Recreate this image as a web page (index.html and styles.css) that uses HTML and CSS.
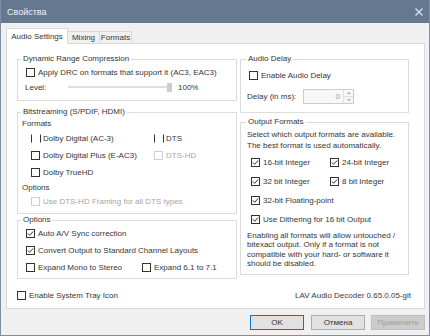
FILE: index.html
```html
<!DOCTYPE html>
<html lang="ru">
<head>
    <meta charset="UTF-8">
    <title>Свойства</title>
    <link rel="stylesheet" href="styles.css">
</head>
<body>
<div class="window">
    <div class="titlebar">
        <span class="title">Свойства</span>
        <svg class="close" width="8" height="8" viewBox="0 0 8 8"><path d="M0.5 0.5 L7.5 7.5 M7.5 0.5 L0.5 7.5"/></svg>
    </div>

    <div class="content">
        <div class="tabs">
            <div class="tab active">Audio Settings</div>
            <div class="tab tab-mixing">Mixing</div>
            <div class="tab tab-formats">Formats</div>
        </div>

        <div class="panel">
            <div class="columns">
                <!-- left column -->
                <div class="col-left">
                    <div class="group group-drc">
                        <span class="group-title">Dynamic Range Compression</span>
                        <div class="row pad-8"><span class="cb"></span>Apply DRC on formats that support it (AC3, EAC3)</div>
                        <div class="row level-row">
                            <span class="level-label">Level:</span>
                            <div class="slider"><span class="thumb"></span></div>
                            <span class="level-value">100%</span>
                        </div>
                    </div>

                    <div class="group group-bitstream">
                        <span class="group-title">Bitstreaming (S/PDIF, HDMI)</span>
                        <div class="sub-label formats-label">Formats</div>
                        <div class="row pad-13">
                            <span class="opt w-123"><span class="cb cut"></span>Dolby Digital (AC-3)</span>
                            <span class="opt"><span class="cb cut"></span>DTS</span>
                        </div>
                        <div class="row pad-13">
                            <span class="opt w-123"><span class="cb"></span>Dolby Digital Plus (E-AC3)</span>
                            <span class="opt disabled"><span class="cb"></span>DTS-HD</span>
                        </div>
                        <div class="row pad-13"><span class="cb"></span>Dolby TrueHD</div>
                        <div class="sub-label options-label">Options</div>
                        <div class="row row-16 pad-13 disabled"><span class="cb"></span>Use DTS-HD Framing for all DTS types</div>
                    </div>

                    <div class="group group-options">
                        <span class="group-title">Options</span>
                        <div class="row pad-8"><span class="cb checked"><svg viewBox="0 0 7 7"><path d="M0.8 3.4 L2.7 5.3 L6.2 1.4"/></svg></span>Auto A/V Sync correction</div>
                        <div class="row pad-8"><span class="cb checked"><svg viewBox="0 0 7 7"><path d="M0.8 3.4 L2.7 5.3 L6.2 1.4"/></svg></span>Convert Output to Standard Channel Layouts</div>
                        <div class="row pad-8">
                            <span class="opt w-116"><span class="cb"></span>Expand Mono to Stereo</span>
                            <span class="opt"><span class="cb"></span>Expand 6.1 to 7.1</span>
                        </div>
                    </div>
                </div>

                <!-- right column -->
                <div class="col-right">
                    <div class="group group-delay">
                        <span class="group-title">Audio Delay</span>
                        <div class="row pad-8 delay-check"><span class="cb"></span>Enable Audio Delay</div>
                        <div class="delay-row">
                            <span class="delay-label">Delay (in ms):</span>
                            <div class="spin">
                                <span class="spin-value">0</span>
                                <span class="spin-btns">
                                    <span class="spin-up"></span>
                                    <span class="spin-down"></span>
                                </span>
                            </div>
                        </div>
                    </div>

                    <div class="group group-output">
                        <span class="group-title">Output Formats</span>
                        <p class="note note-top">Select which output formats are available.<br>The best format is used automatically.</p>
                        <div class="fmt-list">
                            <div class="row row-19 pad-10">
                                <span class="opt w-79"><span class="cb checked"><svg viewBox="0 0 7 7"><path d="M0.8 3.4 L2.7 5.3 L6.2 1.4"/></svg></span>16-bit Integer</span>
                                <span class="opt"><span class="cb checked"><svg viewBox="0 0 7 7"><path d="M0.8 3.4 L2.7 5.3 L6.2 1.4"/></svg></span>24-bit Integer</span>
                            </div>
                            <div class="row row-19 pad-10">
                                <span class="opt w-79"><span class="cb checked"><svg viewBox="0 0 7 7"><path d="M0.8 3.4 L2.7 5.3 L6.2 1.4"/></svg></span>32 bit Integer</span>
                                <span class="opt"><span class="cb checked"><svg viewBox="0 0 7 7"><path d="M0.8 3.4 L2.7 5.3 L6.2 1.4"/></svg></span>8 bit Integer</span>
                            </div>
                            <div class="row row-19 pad-10"><span class="cb checked"><svg viewBox="0 0 7 7"><path d="M0.8 3.4 L2.7 5.3 L6.2 1.4"/></svg></span>32-bit Floating-point</div>
                            <div class="row row-19 pad-10"><span class="cb checked"><svg viewBox="0 0 7 7"><path d="M0.8 3.4 L2.7 5.3 L6.2 1.4"/></svg></span>Use Dithering for 16 bit Output</div>
                        </div>
                        <p class="note note-bottom">Enabling all formats will allow untouched /<br>bitexact output. Only if a format is not<br>compatible with your hard- or software it<br>should be disabled.</p>
                    </div>
                </div>
            </div>

            <div class="panel-footer">
                <div class="row tray"><span class="cb"></span>Enable System Tray Icon</div>
                <span class="version">LAV Audio Decoder 0.65.0.05-git</span>
            </div>
        </div>

        <div class="buttons">
            <button class="btn btn-default">OK</button>
            <button class="btn">Отмена</button>
            <button class="btn" disabled>Применить</button>
        </div>
    </div>
</div>
</body>
</html>
```

FILE: styles.css
```css
* {
    margin: 0;
    padding: 0;
    box-sizing: border-box;
}

body {
    font-family: 'Liberation Sans', Arial, sans-serif;
    font-size: 8px;
    color: #363636;
    background: #f0f0f0;
}

.window {
    width: 430px;
    height: 336px;
    background: #f0f0f0;
    border: 1px solid #7f8fa3;
    border-top: none;
    overflow: hidden;
}

/* title bar */
.titlebar {
    height: 23px;
    margin: 0 -1px;
    background: #66788f;
    display: flex;
    align-items: center;
    justify-content: space-between;
    padding: 0 7px 0 7px;
}

.title {
    color: #eef1f4;
    font-size: 9px;
}

.close {
    stroke: #e3e8ee;
    stroke-width: 1.1;
    fill: none;
}

.content {
    padding: 5px 4px 0 5px;
}

/* tabs */
.tabs {
    display: flex;
    align-items: flex-end;
    height: 16px;
    margin-bottom: -1px;
    position: relative;
    z-index: 1;
}

.tab {
    height: 13px;
    line-height: 12px;
    text-align: center;
    border: 1px solid #d9d9d9;
    background: #f0f0f0;
    margin-left: -1px;
}

.tab.active {
    height: 16px;
    line-height: 16px;
    width: 62px;
    margin-left: 0;
    background: #fff;
    border-bottom: none;
}

.tab-mixing {
    width: 33px;
}

.tab-formats {
    width: 33px;
}

/* panel */
.panel {
    background: #fff;
    border: 1px solid #d9d9d9;
    padding: 15px 15px 7px 10px;
}

.columns {
    display: flex;
    gap: 3px;
    align-items: flex-start;
}

.col-left {
    width: 220px;
}

.col-right {
    width: 169px;
}

.group {
    border: 1px solid #dcdcdc;
    display: flex;
    flex-direction: column;
}

.group-title {
    align-self: flex-start;
    height: 10px;
    line-height: 10px;
    margin: -6px 0 0 3px;
    padding: 0 2px;
    background: #fff;
}

.col-right .group-title {
    margin-left: 5px;
}

.group-drc {
    padding-bottom: 7px;
}

.group-bitstream {
    margin-top: 11px;
    padding-bottom: 4px;
}

.group-options {
    margin-top: 6px;
    padding-bottom: 2px;
}

.row {
    display: flex;
    align-items: center;
    height: 17px;
    white-space: nowrap;
}

.row-16 {
    height: 16px;
}

.row-19 {
    height: 19px;
}

.pad-8 {
    padding-left: 8px;
}

.pad-10 {
    padding-left: 10px;
}

.pad-13 {
    padding-left: 13px;
}

.opt {
    display: flex;
    align-items: center;
}

.w-123 {
    width: 123px;
}

.w-116 {
    width: 116px;
}

.w-79 {
    width: 79px;
}

.disabled {
    color: #a6a6a6;
}

/* checkbox */
.cb {
    width: 9px;
    height: 9px;
    border: 1px solid #333;
    background: #fff;
    margin-right: 3px;
    flex: none;
    display: flex;
}

.cb svg {
    width: 7px;
    height: 7px;
    fill: none;
    stroke: #333;
    stroke-width: 1;
}

.cb.cut {
    border-top-color: transparent;
    border-bottom-color: transparent;
    width: 10px;
    margin-right: 2px;
}

.disabled .cb {
    border-color: #cfcfcf;
}

.sub-label {
    padding-left: 4px;
    display: flex;
    align-items: center;
}

.formats-label {
    height: 13px;
}

.options-label {
    height: 12px;
}

/* level slider */
.level-row {
    height: 12px;
    padding-left: 7px;
}

.level-label {
    width: 43px;
}

.slider {
    width: 104px;
    height: 9px;
    display: flex;
    justify-content: flex-end;
    background: linear-gradient(#dedede, #dedede) no-repeat left center / 100% 2px;
}

.thumb {
    width: 5px;
    height: 9px;
    background: #cdcdcd;
}

.level-value {
    margin-left: 6px;
}

/* audio delay */
.group-delay {
    padding-bottom: 8px;
}

.delay-check {
    margin-top: 3px;
}

.delay-row {
    display: flex;
    align-items: center;
    height: 15px;
    margin-top: 5px;
    padding-left: 6px;
}

.delay-label {
    width: 56px;
}

.spin {
    width: 51px;
    height: 15px;
    border: 1px solid #cccccc;
    background: #f7f7f7;
    display: flex;
}

.spin-value {
    flex: 1;
    text-align: right;
    line-height: 13px;
    padding-right: 3px;
    color: #9a9a9a;
}

.spin-btns {
    width: 10px;
    display: flex;
    flex-direction: column;
    border-left: 1px solid #e2e2e2;
}

.spin-up,
.spin-down {
    flex: 1;
    display: flex;
    align-items: center;
    justify-content: center;
}

.spin-up {
    border-bottom: 1px solid #e2e2e2;
}

.spin-up::after {
    content: '';
    border: 2px solid transparent;
    border-bottom-color: #a8a8a8;
    border-top: none;
}

.spin-down::after {
    content: '';
    border: 2px solid transparent;
    border-top-color: #a8a8a8;
    border-bottom: none;
}

/* output formats */
.group-output {
    margin-top: 9px;
    padding-bottom: 5px;
}

.note {
    padding-left: 6px;
    white-space: nowrap;
}

.note-top {
    margin-top: 3px;
    line-height: 10.5px;
}

.fmt-list {
    margin-top: 2px;
}

.note-bottom {
    margin-top: 2px;
    line-height: 9.4px;
}

/* footer */
.panel-footer {
    display: flex;
    justify-content: space-between;
    align-items: center;
    height: 12px;
    margin: 10px -2px 0 0;
}

.tray {
    height: 12px;
}

.version {
    color: #3a3a3a;
}

/* buttons */
.buttons {
    display: flex;
    justify-content: flex-end;
    gap: 6px;
    margin-top: 6px;
}

.btn {
    width: 54px;
    height: 15px;
    font-family: inherit;
    font-size: 8px;
    color: #333;
    background: #e1e1e1;
    border: 1px solid #adadad;
}

.btn-default {
    border-color: #0078d7;
    margin-right: 1px;
}

.btn:disabled {
    background: #cccccc;
    border-color: #bfbfbf;
    color: #9c9c9c;
}
```
